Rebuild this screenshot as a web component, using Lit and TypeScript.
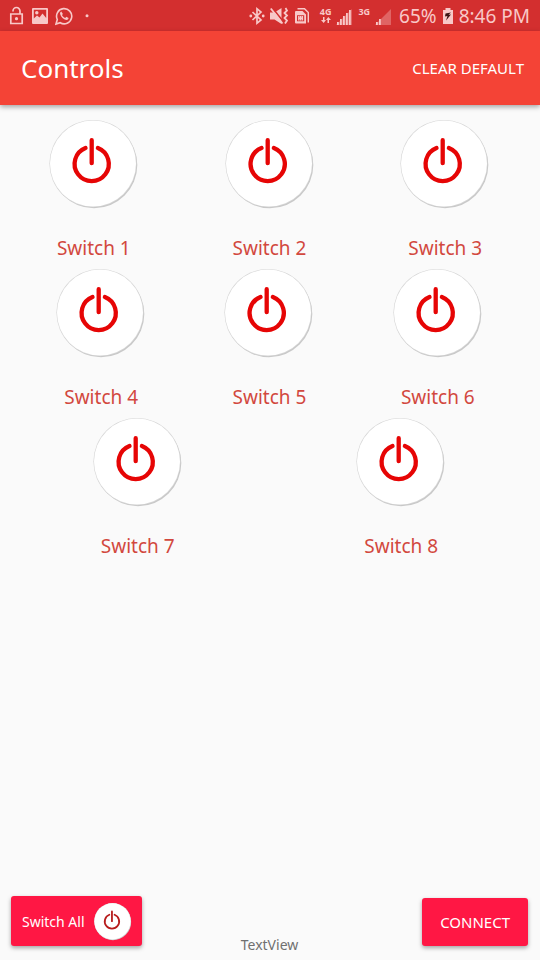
import { LitElement, html, css, svg } from "lit";
import { customElement, property } from "lit/decorators.js";

const FONT = css`"Noto Sans", "Open Sans", sans-serif`;

@customElement("power-icon")
class PowerIcon extends LitElement {
  static styles = css`
    :host {
      display: block;
    }
    svg {
      display: block;
      width: 100%;
      height: 100%;
      overflow: visible;
    }
    .glyph {
      fill: none;
      stroke: var(--power-color, #e60505);
      stroke-width: 4.3;
      stroke-linecap: round;
    }
  `;

  render() {
    return html`<svg viewBox="0 0 88 88" aria-hidden="true">
      <circle cx="45" cy="45" r="43.3" fill="#c8c8c8" />
      <circle cx="44" cy="43.6" r="43.6" fill="#d6d6d6" />
      <circle cx="44" cy="43.6" r="43" fill="#fff" />
      <path class="glyph" d="M36.5 28A17.1 17.1 0 1 0 48.900 28M42.700 20.200V43.200" />
    </svg>`;
  }
}

@customElement("switch-button")
class SwitchButton extends LitElement {
  @property() label = "";

  static styles = css`
    button {
      display: flex;
      flex-direction: column;
      align-items: center;
      gap: 26px;
      padding: 0;
      border: 0;
      background: none;
      font: 19px/28px ${FONT};
      color: #d2483e;
      cursor: pointer;
    }
    power-icon {
      width: 88px;
      height: 88px;
    }
    span {
      padding-left: 2px;
    }
  `;

  render() {
    return html`<button type="button">
      <power-icon></power-icon>
      <span>${this.label}</span>
    </button>`;
  }
}

@customElement("status-bar")
class StatusBar extends LitElement {
  static styles = css`
    :host {
      display: flex;
      align-items: center;
      justify-content: space-between;
      height: 31px;
      padding: 0 10px 0 9px;
      background: #d32f2f;
      color: #f8c8c8;
      font: 19px/28px ${FONT};
    }
    .group {
      display: flex;
      align-items: center;
    }
    .left {
      gap: 7px;
    }
    .right {
      gap: 5px;
    }
    svg {
      display: block;
      height: 20px;
      fill: currentColor;
    }
    .line {
      fill: none;
      stroke: currentColor;
      stroke-width: 1.7;
    }
    .sim {
      margin-right: 4px;
    }
    .net {
      display: flex;
      flex-direction: column;
      align-items: center;
      height: 18px;
      margin-left: 1px;
      font-size: 9px;
      line-height: 10px;
      font-weight: 700;
    }
    .net svg {
      height: 6px;
    }
    .text {
      white-space: nowrap;
    }
    .charge {
      margin-left: 3px;
    }
  `;

  private signal(level: number) {
    return html`<svg width="16" height="20" viewBox="0 0 16 20" aria-hidden="true">
      <path d="M16 3V19H0Z" opacity=".35" />
      ${[0, 1, 2, 3, 4].map((i) =>
        i < level
          ? svg`<rect x=${i * 3 + 1} y=${16 - i * 3} width="1.8" height=${3 + i * 3} />`
          : null,
      )}
    </svg>`;
  }

  render() {
    return html`
      <div class="group left">
        <svg width="16" height="20" viewBox="0 0 16 20" aria-hidden="true">
          <path class="line" d="M1.800 8H13.200V17.500H1.800ZM4 5.500V5A3.500 3.500 0 0 1 11 5V8" />
          <circle cx="7.500" cy="12.700" r="1.600" />
        </svg>
        <svg width="16" height="20" viewBox="0 0 16 20" aria-hidden="true">
          <rect y="2" width="16" height="16" rx="1" />
          <path d="M1.800 3.800H14.200V12L10.500 7.500 7.500 11.500 5 9.500 1.800 12.500Z" fill="#d32f2f" />
          <circle cx="4.800" cy="6.800" r="1.700" />
        </svg>
        <svg width="18" height="20" viewBox="0 0 18 20" aria-hidden="true">
          <path
            fill="none"
            stroke="currentColor"
            stroke-width="1.600"
            d="M1 18 2.300 13.500A7.600 7.600 0 1 1 5.200 16.700Z"
          />
          <path
            d="M6.300 5.400C5.300 5.800 4.800 6.900 5.200 8.300 6 11.100 8.500 13.500 11.300 14 12.500 14.100 13.500 13.300 13.600 12L11.300 10.800 10.200 12C8.800 11.500 7.600 10.300 7 9L7.900 7.900Z"
          />
        </svg>
        <svg width="12" height="20" viewBox="0 0 12 20" aria-hidden="true">
          <circle cx="7" cy="9.800" r="1.500" />
        </svg>
      </div>
      <div class="group right">
        <svg width="16" height="20" viewBox="0 0 16 20" aria-hidden="true">
          <path
            fill="none"
            stroke="currentColor"
            stroke-width="1.700"
            d="M3.500 6 12 14 8 17.300V2.700L12 6 3.500 14"
          />
          <circle cx="1.800" cy="10" r="1.400" />
          <circle cx="14.200" cy="10" r="1.400" />
        </svg>
        <svg width="19" height="20" viewBox="0 0 19 20" aria-hidden="true">
          <path d="M0 6.500H4.500L11.500 2V18L4.500 13.500H0Z" />
          <path d="M2.500 2 14 16.500" stroke="#d32f2f" stroke-width="1.600" />
          <path d="M0.800 2.500 12.500 17.500" stroke="currentColor" stroke-width="1.800" />
          <path
            fill="none"
            stroke="currentColor"
            stroke-width="1.800"
            d="M15.500 2 17 4.500 14.500 7 17 9.500 14.500 12 17 14.500 15 17.500"
          />
        </svg>
        <svg class="sim" width="16" height="20" viewBox="0 0 16 20" aria-hidden="true">
          <path
            fill-rule="evenodd"
            d="M2 5H8.500L12 8.500V17.500H2Q1 17.500 1 16.500V6Q1 5 2 5ZM3 9.200V15.300H10.200V9.200Z"
          />
          <path
            fill="none"
            stroke="currentColor"
            stroke-width="1.400"
            d="M3.500 2.800H10.500L14.300 6.500V16.500M4.800 10V14.600M6.600 10V14.600M8.400 10V14.600M4.500 12.300H8.500"
          />
        </svg>
        <span class="net">
          4G
          <svg width="10" viewBox="0 0 10 6" aria-hidden="true">
            <path d="M2 0H3.500V3H5L2.700 6 0 3H2ZM6.500 6H8V3H10L7.300 0 5 3H6.500Z" />
          </svg>
        </span>
        ${this.signal(5)}
        <span class="net">3G</span>
        ${this.signal(2)}
        <span class="text charge">65%</span>
        <svg width="12" height="20" viewBox="0 0 12 20" aria-hidden="true">
          <path d="M3.500 2H8.500V4H11V18H1V4H3.500Z" />
          <path d="M9 6.500 3.500 7.500 3 10.500 5.500 10 4 14.500 9 8.500 6.500 8.700Z" fill="#3b1414" />
        </svg>
        <span class="text">8:46 PM</span>
      </div>
    `;
  }
}

@customElement("app-root")
class AppRoot extends LitElement {
  static styles = css`
    :host {
      display: flex;
      flex-direction: column;
      min-height: 100vh;
      background: #fafafa;
      font-family: ${FONT};
    }
    header {
      display: flex;
      align-items: center;
      justify-content: space-between;
      height: 74px;
      padding: 0 16px 0 21px;
      background: #f44336;
      color: #fff;
      box-shadow: 0 2px 5px rgba(0, 0, 0, 0.35);
    }
    h1 {
      margin: 0;
      font-size: 26px;
      line-height: 36px;
      font-weight: 400;
    }
    button {
      border: 0;
      font-family: inherit;
      color: #fff;
      cursor: pointer;
    }
    .clear {
      padding: 0;
      background: none;
      font-size: 15px;
      line-height: 20px;
    }
    main {
      flex: 1;
      display: flex;
      flex-direction: column;
      gap: 7px;
      padding: 15px 8px 0 5px;
    }
    .row {
      display: flex;
    }
    .row.inset {
      padding: 0 11px;
    }
    switch-button {
      flex: 1;
      display: flex;
      justify-content: center;
    }
    footer {
      display: grid;
      grid-template-columns: 1fr auto 1fr;
      align-items: end;
      padding: 0 12px 5px 11px;
    }
    .action {
      display: flex;
      align-items: center;
      margin-bottom: 9px;
      border-radius: 3px;
      background: #ff1744;
      box-shadow: 0 2px 4px rgba(0, 0, 0, 0.35);
    }
    .all {
      justify-self: start;
      height: 50px;
      gap: 9px;
      padding: 0 11px;
      font-size: 14px;
    }
    .all power-icon {
      width: 37px;
      height: 37px;
      --power-color: #b71c1c;
    }
    .connect {
      justify-self: end;
      height: 48px;
      padding: 0 18px;
      font-size: 15px;
    }
    .note {
      font-size: 14px;
      line-height: 20px;
      color: #707070;
    }
  `;

  private row(numbers: number[], inset = false) {
    return html`<div class=${inset ? "row inset" : "row"}>
      ${numbers.map((n) => html`<switch-button label=${`Switch ${n}`}></switch-button>`)}
    </div>`;
  }

  render() {
    return html`
      <status-bar></status-bar>
      <header>
        <h1>Controls</h1>
        <button type="button" class="clear">CLEAR DEFAULT</button>
      </header>
      <main>
        ${this.row([1, 2, 3])} ${this.row([4, 5, 6], true)} ${this.row([7, 8])}
      </main>
      <footer>
        <button type="button" class="action all">
          <span>Switch All</span>
          <power-icon></power-icon>
        </button>
        <span class="note">TextView</span>
        <button type="button" class="action connect">CONNECT</button>
      </footer>
    `;
  }
}
